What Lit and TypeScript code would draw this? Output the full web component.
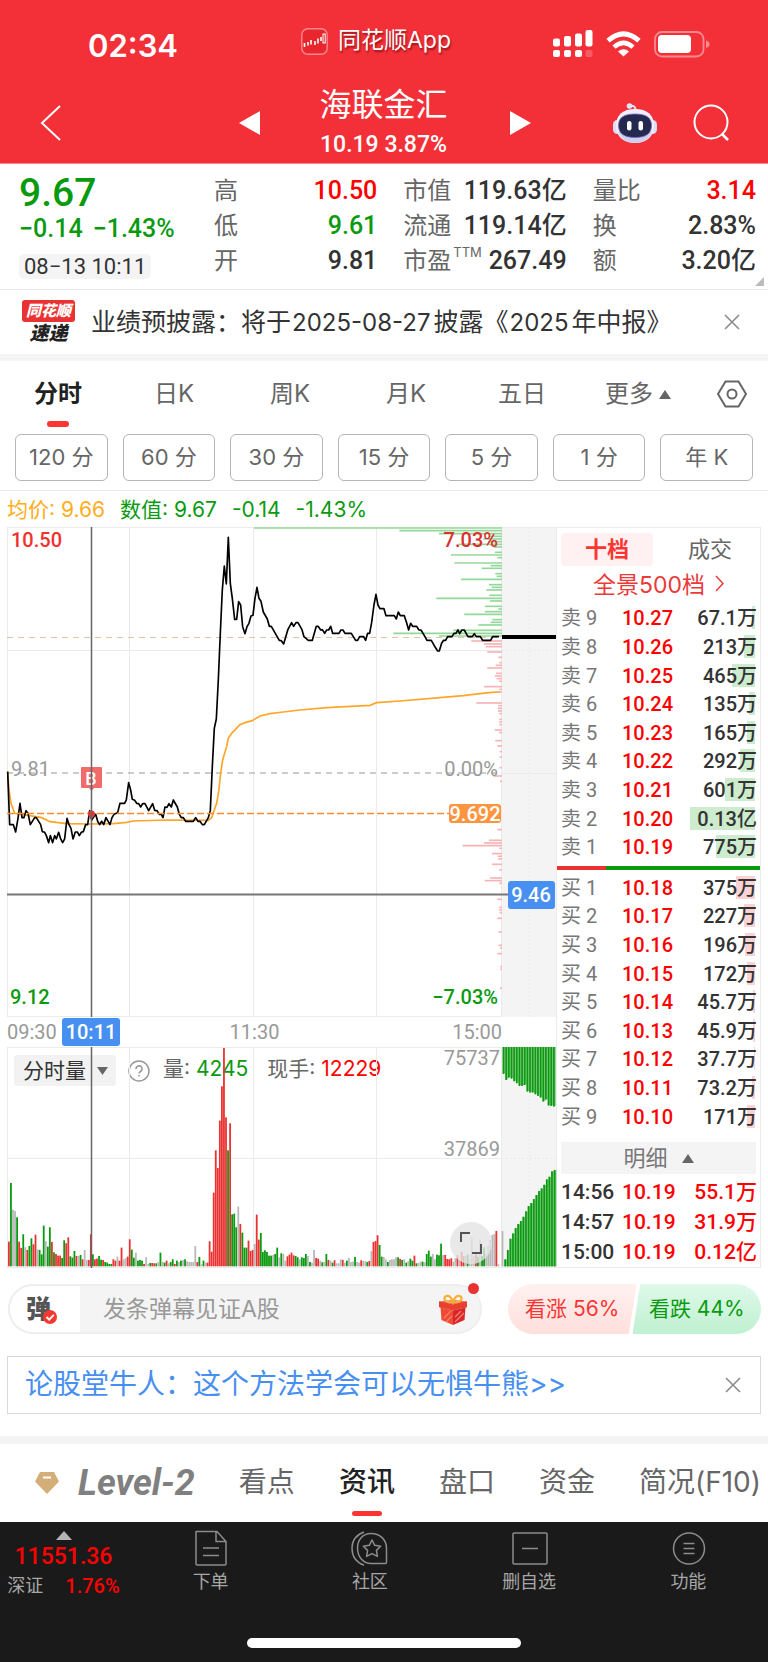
import { LitElement, html, svg, css } from 'lit';
import { customElement } from 'lit/decorators.js';
import { classMap } from 'lit/directives/class-map.js';

const RED = '#ea3232';
const GREEN = '#0a9a0f';
const GREY = '#b9b9b9';

/* Intraday price track, three units per pixel. */
const PRICE =
  '23,755 29,914 40,914 47,936 54,895 60,850 66,893 72,893 78,872 84,880 91,914 104,893 109,893 122,914 127,935 134,937 139,947 146,968 151,947 158,968 164,947 169,957 176,937 182,957 188,968 194,957 201,895 207,914 213,925 219,957 226,936 232,936 238,947 244,937 250,935 257,914 263,914 269,872 275,900 280,893 287,883 293,904 299,914 305,904 311,914 318,893 330,914 336,893 342,883 353,878 360,850 374,850 379,840 386,788 392,810 397,838 404,841 410,850 416,851 422,861 428,851 435,851 446,872 458,851 464,871 471,872 478,883 484,883 489,893 495,861 501,862 507,851 514,861 520,840 532,861 538,883 544,893 550,893 557,904 580,904 587,893 594,904 600,904 607,914 613,914 625,893 631,872 637,740 643,625 649,597 655,480 661,340 667,210 673,138 679,192 685,52 691,190 697,235 704,298 710,298 716,245 722,255 728,320 735,341 741,320 747,310 753,288 759,286 765,235 771,202 777,235 783,244 790,276 802,297 808,319 814,319 826,340 838,361 844,362 851,372 864,328 875,308 881,319 888,308 894,308 906,329 912,350 925,361 937,361 949,319 955,319 962,330 967,329 974,340 980,330 986,330 992,319 998,340 1017,340 1023,330 1029,330 1035,340 1054,340 1067,361 1073,361 1079,350 1091,350 1097,361 1103,340 1109,340 1115,308 1122,255 1128,223 1134,255 1140,266 1152,266 1158,287 1183,287 1189,297 1195,276 1201,287 1213,287 1220,308 1226,330 1232,310 1238,319 1250,319 1257,330 1263,330 1275,350 1281,361 1294,361 1306,382 1313,393 1318,393 1325,370 1331,361 1337,361 1343,350 1356,350 1362,340 1368,340 1374,330 1379,341 1386,330 1393,330 1404,350 1417,350 1423,341 1429,350 1441,350 1448,361 1472,361 1478,350 1497,350';
const AVERAGE =
  '23,755 27,810 33,850 44,880 90,887 125,893 150,905 200,911 270,912 340,911 380,907 400,903 500,900 625,901 635,893 650,850 656,815 662,760 668,720 674,700 680,680 685,655 695,640 720,614 735,608 757,602 780,588 810,581 850,576 900,570 980,563 1110,556 1130,548 1200,543 1320,533 1390,527 1440,521 1475,517 1499,516';

/* Holdings by price: [y, length], same units. */
const CHIPS_UP: [number, number][] = [
  [24, 744], [32, 308], [41, 189], [49, 36], [57, 56], [65, 41], [73, 130], [81, 24], [97, 21], [105, 153], [113, 14],
  [129, 143], [137, 34], [145, 61], [161, 20], [169, 16], [178, 123], [194, 39], [202, 31], [210, 47], [226, 38],
  [235, 197], [243, 36], [259, 51], [267, 11], [275, 51], [283, 113], [299, 29], [307, 34], [315, 71], [331, 146],
  [340, 326], [348, 189],
];
const CHIPS_DOWN: [number, number][] = [
  [363, 92], [372, 54], [380, 49], [396, 44], [412, 11], [428, 8], [436, 19], [444, 44], [460, 18], [468, 21], [476, 16],
  [484, 8], [500, 54], [508, 8], [516, 11], [549, 77], [557, 11], [565, 13], [573, 12], [581, 8], [598, 8], [606, 8],
  [614, 8], [630, 22], [638, 8], [662, 20], [678, 14], [695, 7], [711, 7], [743, 7], [768, 26], [784, 6], [929, 14],
  [961, 39], [969, 54], [977, 118], [985, 8], [1001, 30], [1009, 13], [1017, 11], [1033, 30], [1050, 8], [1074, 36],
  [1082, 52], [1090, 8], [1138, 14], [1162, 8], [1170, 8], [1178, 7], [1195, 14], [1236, 10], [1276, 10], [1284, 5],
  [1301, 14], [1340, 5], [1348, 5], [1405, 6],
];

/* One bar a minute: colour letter and top edge. */
const VOLUME =
  'r1175 g999 a1079 a1083 g1102 r1175 r1194 g1153 a1192 r1200 g1188 g1165 r1183 r1154 a1198 g1200 g1213 g1127 a1173 g1190 g1132 r1176 g1207 r1212 r1217 r1217 g1224 g1171 r1180 r1162 g1219 g1223 g1203 r1218 a1218 g1215 r1228 a1200 a1230 r1230 r1153 g1213 r1228 r1226 g1218 g1229 r1230 g1236 g1238 g1242 g1242 r1228 r1232 a1220 r1232 r1193 a1228 a1225 r1220 r1168 g1199 g1223 a1208 g1232 g1230 g1232 r1242 a1222 a1242 g1239 r1239 r1240 g1240 a1236 g1208 a1236 g1238 r1232 a1240 g1236 g1228 r1242 g1232 a1236 g1232 a1230 g1228 a1234 a1236 a1236 a1236 a1188 r1236 g1221 a1243 g1232 a1238 r1238 r1174 r1205 r1028 r901 r954 r812 r709 r594 r802 g901 r820 g1093 g1091 g1132 a1070 r1122 g1148 g1193 g1193 r1172 r1203 r1200 a1182 r1094 r1169 g1149 g1206 g1201 g1206 g1217 g1217 a1215 g1212 g1193 a1222 g1210 a1212 a1232 r1219 r1214 r1208 r1216 g1218 g1222 a1228 g1222 g1224 g1212 a1218 g1236 a1238 a1200 r1224 r1226 a1232 g1237 a1236 g1212 r1230 a1232 g1238 r1231 a1240 a1240 a1228 r1230 a1238 g1232 a1224 a1236 a1235 g1221 a1236 a1238 r1231 a1233 a1234 g1236 r1233 a1203 r1176 r1173 r1156 g1185 g1220 a1221 a1228 g1236 a1230 a1228 a1228 a1222 g1222 r1227 g1230 a1228 g1238 a1234 g1226 g1232 r1217 g1240 a1239 a1235 g1235 a1237 g1212 g1202 g1220 a1212 a1228 g1214 g1216 g1181 a1215 r1215 r1227 r1228 r1225 a1235 a1225 r1215 a1230 r1206 r1218 a1218 g1214 a1228 a1162 a1218 r1211 g1220 a1168 g1218 g1192 a1212 a1188 a1170 a1155 a1152 r1143 a1243 a1249 a1143'.split(' ');

const ASK_DEPTH = [642, 660, 653, 656, 664, 670, 678, 678, 675, 695, 698, 698, 703, 708, 713, 725, 719, 737, 738, 740];
const BID_DEPTH = [389, 361, 327, 311, 295, 283, 274, 261, 245, 229, 220, 208, 196, 184, 176, 165, 149, 141, 125, 121];

type Level = [string, string, string, number];
const SELL: Level[] = [
  ['卖 9', '10.27', '67.1万', 3], ['卖 8', '10.26', '213万', 11], ['卖 7', '10.25', '465万', 23],
  ['卖 6', '10.24', '135万', 6], ['卖 5', '10.23', '165万', 8], ['卖 4', '10.22', '292万', 15],
  ['卖 3', '10.21', '601万', 30], ['卖 2', '10.20', '0.13亿', 65], ['卖 1', '10.19', '775万', 39],
];
const BUY: Level[] = [
  ['买 1', '10.18', '375万', 19], ['买 2', '10.17', '227万', 11], ['买 3', '10.16', '196万', 10],
  ['买 4', '10.15', '172万', 8], ['买 5', '10.14', '45.7万', 2], ['买 6', '10.13', '45.9万', 2],
  ['买 7', '10.12', '37.7万', 1], ['买 8', '10.11', '73.2万', 3], ['买 9', '10.10', '171万', 8],
];
const TRADES = [['14:56', '10.19', '55.1万'], ['14:57', '10.19', '31.9万'], ['15:00', '10.19', '0.12亿']];

const base = css`
  *, *::before, *::after { box-sizing: border-box; }
  button, input, select {
    font: inherit; color: inherit; background: none; border: 0; padding: 0; margin: 0;
    border-radius: 0; appearance: none; cursor: pointer;
  }
  a { color: inherit; text-decoration: none; }
  svg { display: block; flex: none; }
  table { border-collapse: collapse; }
  th, td { padding: 0; font-weight: inherit; text-align: left; }
  .num { font-family: Roboto, 'Noto Sans CJK SC', sans-serif; font-weight: 500; }
  .up { color: #ff0000; }
  .down { color: #0a9a0f; }
`;

@customElement('stock-chart')
class StockChart extends LitElement {
  static styles = [base, css`
    :host { display: block; min-width: 0; }
    .plot { width: 100%; height: auto; overflow: visible; }
    .plot text { font: 500 20px Roboto, sans-serif; }
    .axis {
      position: relative; display: flex; justify-content: space-between; align-items: center;
      height: 30px; padding-right: 54px; color: #999; font: 400 20px Roboto, sans-serif;
    }
    .cursor {
      position: absolute; left: 55px; top: 1px; width: 58px; height: 28px; line-height: 28px; text-align: center;
      background: #478ff0; color: #fff; border-radius: 3px; font-weight: 500;
    }
    .volume { position: relative; }
    .volume .plot { position: relative; pointer-events: none; }
    .tools {
      position: absolute; left: 7px; top: 8px; display: flex; align-items: center; height: 31px;
      font: 400 21px/27px Inter, 'Noto Sans CJK SC', sans-serif; color: #666;
    }
    .picker { position: relative; display: flex; align-items: center; }
    .picker select {
      width: 102px; height: 31px; padding-left: 9px; background: #f2f2f2; border-radius: 3px; color: #333;
      font-size: 21px; line-height: 31px;
    }
    .caret { position: absolute; right: 8px; }
    .help { display: flex; margin: 0 13px 0 12px; }
    .figure { margin-right: 19px; padding-bottom: 4px; white-space: nowrap; }
    .figure b { font-weight: 400; }
    .expand {
      position: absolute; right: 64px; bottom: 4px; width: 42px; height: 42px; border-radius: 50%;
      background: rgba(228, 228, 228, .8); display: grid; place-items: center;
    }
  `];

  private price() {
    return html`<svg class="plot" viewBox="0 0 549 490" role="img" aria-label="分时走势">
      <rect x="495" y="0" width="54" height="490" fill="#f4f4f4" />
      <g stroke="#ebebeb" fill="none">
        <path d="M0 .5H549M.5 0V490M0 489.5H495M122.5 0V490M246.500 0V490M369.500 0V490M494.500 0V490M0 123.500H494M495 246.500H549" />
        <path d="M495 123.500H549M522.500 0V490" stroke-dasharray="2 2" />
      </g>
      <path d="M0 110.500H494" stroke="#e2c4a2" stroke-dasharray="6 5" />
      <path d="M0 246H494" stroke="#999" stroke-dasharray="6 5" />
      <text x="4" y="249" fill="#999" style="font-weight:400">9.81</text>
      <g transform="translate(-7 -7) scale(.3333)">
        <g stroke="#94d79a" stroke-width="5">
          ${CHIPS_UP.map(([y, w]) => svg`<path d=${`M${1506 - w} ${y}H1506`} />`)}
        </g>
        <g stroke="#f7b3b5" stroke-width="5">
          ${CHIPS_DOWN.map(([y, w]) => svg`<path d=${`M${1506 - w} ${y}H1506`} />`)}
        </g>
        <polyline points=${AVERAGE} fill="none" stroke="#ffa528" stroke-width="5" />
        <polyline points=${PRICE} fill="none" stroke="#000" stroke-width="5" stroke-linejoin="round" />
      </g>
      <path d="M495 110H549" stroke="#000" stroke-width="4" />
      <path d="M0 286.500H442" stroke="#f98a30" stroke-width="1.500" stroke-dasharray="7 3" />
      <rect x="442" y="277" width="52" height="19" rx="3" fill="#fd9540" />
      <text x="468" y="294" fill="#fff" text-anchor="middle">9.692</text>
      <text x="4" y="20" fill="#f23030">10.50</text>
      <text x="491" y="20" fill="#dd3030" text-anchor="end">7.03%</text>
      <text x="491" y="249" fill="#999" text-anchor="end" style="font-weight:400">0.00%</text>
      <text x="3" y="477" fill=${GREEN}>9.12</text>
      <text x="491" y="477" fill=${GREEN} text-anchor="end">−7.03%</text>
      <path d="M0 367.500H501" stroke="#777" stroke-width="2" />
      <path d="M84.500 262V286" stroke="#ea3232" stroke-dasharray="2 2" />
      <circle cx="84.500" cy="287" r="3.500" fill="#ea3232" />
      <path d="M75 240h19a1 1 0 0 1 1 1v19a1 1 0 0 1-1 1h-7l-2.500 3-2.500-3h-7a1 1 0 0 1-1-1v-19a1 1 0 0 1 1-1z" fill="#f26b6b" />
      <text x="84" y="258" fill="#fff" text-anchor="middle" style="font-size:18px">B</text>
      <path d="M84.500 0V490" stroke="#666" stroke-width="1.500" />
      <rect x="501" y="354" width="47" height="28" rx="3" fill="#478ff0" />
      <text x="524" y="375" fill="#fff" text-anchor="middle">9.46</text>
    </svg>`;
  }

  private volume() {
    const fill: Record<string, string> = { r: RED, g: GREEN, a: GREY };
    return html`<svg class="plot" viewBox="0 0 549 221" role="img" aria-label="成交量">
      <rect x="495" y="0" width="54" height="220" fill="#f4f4f4" />
      <g stroke="#ebebeb" fill="none">
        <path d="M0 .5H549M.5 0V221M122.500 0V221M246.500 0V221M369.500 0V221M494.500 0V221M0 111.500H494M0 220.500H549" />
        <path d="M495 111.500H549M522.500 0V220" stroke-dasharray="2 2" />
      </g>
      <g transform="translate(-7 -197) scale(.3333)">
        ${VOLUME.map((v, i) => svg`<rect x=${24 + 6.145 * i} y=${+v.slice(1)} width="5.400" height=${1249 - +v.slice(1)} fill=${fill[v[0]]} />`)}
      </g>
      <g transform="translate(495 0) scale(.3333)">
        ${ASK_DEPTH.map((b, i) => svg`<rect x=${2 + 7.950 * i} y="0" width="8" height=${b - 563} fill="#7cc67e" /><rect x=${2 + 7.950 * i} y="0" width="5" height=${b - 561} fill=${GREEN} />`)}
        ${BID_DEPTH.map((t, i) => svg`<rect x=${7 + 7.800 * i} y=${t + 249} width="8" height=${409 - t} fill="#7cc67e" /><rect x=${7 + 7.800 * i} y=${t + 248} width="5" height=${410 - t} fill=${GREEN} />`)}
      </g>
      <text x="493" y="18" fill="#999" text-anchor="end" style="font-weight:400">75737</text>
      <text x="493" y="109" fill="#999" text-anchor="end" style="font-weight:400">37869</text>
      <path d="M84.500 0V221" stroke="#666" stroke-width="1.500" />
    </svg>`;
  }

  render() {
    return html`
      ${this.price()}
      <div class="axis"><span>09:30</span><span>11:30</span><span>15:00</span><span class="cursor">10:11</span></div>
      <div class="volume">
        <div class="tools">
          <span class="picker">
            <select aria-label="副图指标"><option>分时量</option></select>
            <svg class="caret" width="11" height="8" viewBox="0 0 11 8"><path d="M0 0h11L5.500 8z" fill="#666" /></svg>
          </span>
          <button class="help" aria-label="指标说明">
            <svg width="22" height="22" viewBox="0 0 22 22" fill="none" stroke="#999" stroke-width="1.500">
              <circle cx="11" cy="11" r="10" />
              <path d="M8 9a3 3 0 1 1 4.500 2.500q-1.500.9-1.500 2.100M11 15v1.600" />
            </svg>
          </button>
          <span class="figure">量: <b class="down">4245</b></span>
          <span class="figure">现手: <b class="up">12229</b></span>
        </div>
        ${this.volume()}
        <button class="expand" aria-label="全屏">
          <svg width="22" height="22" viewBox="0 0 22 22" fill="none" stroke="#555" stroke-width="2"><path d="M1 10V1h9M21 12v9h-9" /></svg>
        </button>
      </div>`;
  }
}

@customElement('order-book')
class OrderBook extends LitElement {
  static styles = [base, css`
    :host {
      display: flex; flex-direction: column; border: 1px solid #ebebeb;
      font-family: Roboto, 'Noto Sans CJK SC', sans-serif; color: #333;
    }
    .tabs { display: flex; justify-content: space-between; margin: 5px 4px 0; }
    .tab { width: 92px; height: 33px; padding-bottom: 4px; font: 400 22px/29px 'Noto Sans CJK SC', sans-serif; color: #666; }
    .tab.on { background: #fff1f1; color: #fb3632; font-weight: 700; border-radius: 4px; }
    .more {
      display: flex; justify-content: center; align-items: center; gap: 10px; height: 38px; padding-bottom: 4px;
      font: 400 23px Inter, 'Noto Sans CJK SC', sans-serif; color: #ea3a3a;
    }
    table { flex: 1; display: flex; }
    tbody { flex: 1; display: flex; flex-direction: column; }
    tr { flex: 1; display: grid; grid-template-columns: 61px 1fr auto; align-items: center; padding: 0 3px 0 4px; font-size: 20px; line-height: 28px; }
    th { font-weight: 400; color: #777; white-space: nowrap; }
    td { font-weight: 500; }
    .qty { position: relative; text-align: right; }
    .depth { position: absolute; right: 2px; top: 2px; height: 23px; background: #cdebcd; }
    .buy .depth { background: #fcd3d4; }
    .qty span { position: relative; }
    .ratio { display: flex; height: 4px; margin: 4px 0; background: #0a9a0f; }
    .ratio i { width: 24%; background: #ea3232; }
    .detail {
      display: flex; justify-content: center; align-items: center; gap: 14px; height: 32px; margin: 11px 4px 3px;
      background: #f4f4f4; color: #777; font: 400 22px/28px 'Noto Sans CJK SC', sans-serif;
    }
    .detail span { padding-bottom: 4px; }
    .trades { flex: none; }
    .trades tr { font-size: 21px; line-height: 30px; }
    .trades th { color: #333; font-weight: 500; }
  `];

  private levels(rows: Level[], side: string) {
    return html`<table class=${side} aria-label=${side === 'buy' ? '买盘' : '卖盘'}><tbody>
      ${rows.map(([name, price, qty, depth]) => html`<tr>
        <th scope="row">${name}</th><td class="up">${price}</td>
        <td class="qty"><i class="depth" style=${`width:${depth}px`}></i><span>${qty}</span></td>
      </tr>`)}
    </tbody></table>`;
  }

  render() {
    return html`
      <div class="tabs"><button class="tab on">十档</button><button class="tab">成交</button></div>
      <a class="more" href="#depth">全景500档
        <svg width="9" height="17" viewBox="0 0 9 17" fill="none" stroke="#ea3a3a" stroke-width="1.500"><path d="M1 1l7 7.500L1 16" /></svg>
      </a>
      ${this.levels(SELL, 'sell')}
      <div class="ratio"><i></i></div>
      ${this.levels(BUY, 'buy')}
      <button class="detail"><span>明细</span><svg width="12" height="9" viewBox="0 0 12 9"><path d="M0 9L6 0l6 9z" fill="#666" /></svg></button>
      <table class="trades" aria-label="成交明细"><tbody>
        ${TRADES.map(([t, p, q]) => html`<tr><th scope="row">${t}</th><td class="up">${p}</td><td class="up">${q}</td></tr>`)}
      </tbody></table>`;
  }
}

@customElement('app-root')
class AppRoot extends LitElement {
  static styles = [base, css`
    :host { display: block; background: #fff; color: #333; font-family: Inter, 'Noto Sans CJK SC', sans-serif; line-height: 1.2; }
    header { background: #f33038; color: #fff; border-bottom: 1px solid #f7898d; }
    .status { display: grid; grid-template-columns: 1fr auto 1fr; align-items: center; height: 82px; padding: 6px 58px 0; }
    .clock { font-size: 31px; font-weight: 600; padding: 4px 0 0 30px; }
    .brand { display: flex; align-items: center; gap: 10px; font-size: 23px; text-shadow: 1px 2px 2px rgba(90, 0, 0, .6); margin: 0 16px 6px 0; }
    .signals { display: flex; justify-content: flex-end; align-items: center; gap: 13px; }
    .nav { display: grid; grid-template-columns: 1fr auto 1fr; align-items: center; height: 81px; padding: 0 38px 0 40px; }
    .nav button { display: flex; }
    .stock { display: flex; align-items: center; }
    .name { width: 250px; padding-right: 3px; text-align: center; }
    h1 { margin: 0; font-size: 32px; line-height: 44px; font-weight: 400; }
    .name p { margin: 0; font-size: 23px; line-height: 36px; }
    .acts { display: flex; justify-content: flex-end; align-items: center; gap: 36px; }

    .quote {
      position: relative; display: grid; grid-template-columns: 169px 1fr 1fr 1fr; column-gap: 26px;
      padding: 9px 12px 8px 19px; height: 126px; border-bottom: 1px solid #e9e9e9;
    }
    .last { display: flex; flex-direction: column; align-items: flex-start; }
    .last .big { font-size: 39px; line-height: 41px; }
    .last .chg { display: flex; gap: 10px; font-size: 25px; line-height: 30px; white-space: nowrap; }
    .stamp { margin-top: 10px; padding: 0 5px; font-size: 22px; line-height: 25px; font-weight: 400; background: #f4f4f4; border-radius: 5px; color: #333; }
    dl { margin: 0; }
    dl div { display: flex; justify-content: space-between; height: 35px; line-height: 35px; font-size: 24px; white-space: nowrap; }
    dt { color: #666; }
    dt sup { position: relative; top: -12px; margin-left: 2px; font-size: 13px; line-height: 1px; vertical-align: baseline; }
    dd { margin: 0; font-size: 25px; }
    .corner { position: absolute; right: 4px; bottom: 3px; }

    .notice { display: flex; align-items: center; height: 64px; padding: 0 28px 0 22px; }
    .tag { width: 53px; margin-right: 16px; text-align: center; font-style: italic; font-weight: 900; }
    .tag b { display: block; margin-bottom: 2px; background: #ea3232; color: #fff; border-radius: 3px; font-size: 15px; line-height: 22px; }
    .tag span { display: block; color: #222; font-size: 19px; line-height: 20px; }
    .notice p { flex: 1; margin: 0; font-size: 25px; white-space: nowrap; }
    .notice p i { font-style: normal; font-size: 24px; padding: 0 3px 0 1px; }
    .band { height: 7px; background: #f4f4f4; }
    .band.tall { height: 8px; }

    .periods { display: flex; height: 73px; padding-right: 21px; }
    .period { flex: 1; height: 66px; font-size: 24px; color: #666; position: relative; }
    .period.on { color: #222; font-weight: 700; }
    .period.on::after, .section.on::after {
      content: ''; position: absolute; left: 50%; bottom: 0; width: 22px; margin-left: -11px; height: 6px; border-radius: 3px; background: #fb3632;
    }
    .period svg { display: inline; margin-left: 6px; vertical-align: 3px; }
    .gear { width: 51px; height: 66px; display: flex; align-items: center; justify-content: flex-end; }
    .spans { display: flex; gap: 15px; padding: 0 15px 9px; border-bottom: 1px solid #e9e9e9; }
    .spans button { flex: 1; height: 47px; border: 1px solid #b5b5b5; border-radius: 6px; font-size: 22px; color: #666; white-space: nowrap; }
    .legend { display: flex; gap: 15px; padding: 0 7px; height: 36px; line-height: 38px; font-size: 21px; }
    .legend .avg { color: #ffae1a; }
    .main { display: grid; grid-template-columns: minmax(0, 1fr) 205px; margin: 0 7px; }

    .social { display: flex; gap: 26px; padding: 16px 7px 0 8px; }
    .danmu { position: relative; flex: 1; min-width: 0; display: flex; align-items: center; height: 50px; border: 2px solid #eee; border-radius: 25px; background: #f4f4f4; padding-right: 12px; }
    .toggle { position: relative; flex: none; width: 70px; height: 46px; border-radius: 23px 0 0 23px; background: #fff; font-size: 25px; font-weight: 900; color: #555; text-align: left; padding-left: 16px; }
    .toggle svg { position: absolute; left: 33px; top: 24px; }
    .danmu input { flex: 1; min-width: 0; height: 46px; padding-left: 23px; font-size: 23px; cursor: text; }
    .danmu input::placeholder { color: #999; opacity: 1; }
    .dot { position: absolute; right: 1px; top: -3px; width: 11px; height: 11px; border-radius: 50%; background: #ea3232; }
    .votes { display: flex; flex: none; width: 253px; }
    .votes button { flex: 1; height: 50px; font-size: 21px; white-space: nowrap; }
    .bull { margin-right: -4px; color: #fb3632; background: linear-gradient(#fff1f0, #ffdfdc); border-radius: 25px 0 0 25px; clip-path: polygon(0 0, 100% 0, 94% 100%, 0 100%); }
    .bear { color: #0a9a0f; background: linear-gradient(#dff9ea, #bff0d1); border-radius: 0 25px 25px 0; clip-path: polygon(6% 0, 100% 0, 100% 100%, 0 100%); }

    .promo { display: flex; align-items: center; height: 58px; margin: 22px 7px; padding: 0 19px 0 17px; border: 1px solid #d9d9d9; }
    .promo a { flex: 1; font-size: 28px; color: #478ff0; white-space: nowrap; }
    .close { display: flex; }

    .sections { display: flex; justify-content: space-between; align-items: center; height: 78px; padding: 0 7px 0 34px; }
    .section { position: relative; height: 78px; font-size: 28px; color: #666; white-space: nowrap; display: flex; align-items: center; }
    .section.on { color: #222; font-weight: 500; }
    .section.on::after { width: 30px; margin-left: -15px; bottom: 6px; height: 5px; }
    .level { gap: 18px; color: #808080; font: italic 700 36px Roboto, sans-serif; }

    footer { background: #1a1a1a; color: #a6a6a6; height: 141px; display: flex; flex-direction: column; justify-content: space-between; align-items: center; padding-bottom: 15px; }
    .dock { display: grid; grid-template-columns: 131px repeat(4, 1fr); width: 100%; }
    .index { display: flex; flex-direction: column; align-items: center; padding: 9px 4px 0 0; }
    .index strong { font-size: 23px; line-height: 30px; margin-top: 2px; font-weight: 500; }
    .index span { display: flex; align-items: center; gap: 22px; font-size: 18px; line-height: 28px; }
    .index .market { color: #a6a6a6; font-weight: 400; }
    .index em { font-style: normal; font-size: 20px; }
    .item { display: flex; flex-direction: column; align-items: center; padding-top: 8px; font-size: 18px; line-height: 22px; }
    .item svg { margin-bottom: 4px; }
    .home { width: 274px; height: 10px; border-radius: 5px; background: #fff; }
  `];

  private cross() {
    return html`<svg width="16" height="16" viewBox="0 0 16 16" stroke="#8c8c8c" stroke-width="1.600"><path d="M1 1l14 14M15 1L1 15" /></svg>`;
  }

  private header() {
    return html`<header>
      <div class="status">
        <span class="clock">02:34</span>
        <span class="brand">
          <svg width="27" height="27" viewBox="0 0 27 27">
            <rect x=".8" y=".8" width="25.400" height="25.400" rx="6" fill="#e8262d" stroke="#f58a8e" stroke-width="1.400" />
            <path d="M3.500 15v4M7 14v3.500M10 12v4.500M14 13v4M17 10.500v5M20 9v4" stroke="#fff" stroke-width="1.600" />
            <rect x="22" y="6" width="2.200" height="9" fill="none" stroke="#fff" />
          </svg>
          同花顺App
        </span>
        <span class="signals">
          <svg width="40" height="28" viewBox="0 0 40 28" fill="#fff">
            <rect x="0" y="8.500" width="7" height="8" rx="2" /><rect x="11" y="6" width="7" height="10.500" rx="2" />
            <rect x="22" y="3.500" width="7" height="13" rx="2" /><rect x="32.500" y="0" width="7" height="16.500" rx="2" />
            <rect x="0" y="20" width="7" height="7" rx="2" /><rect x="11" y="20" width="7" height="7" rx="2" />
            <rect x="22" y="20" width="7" height="7" rx="2" /><rect x="32.500" y="20" width="7" height="7" rx="2" opacity=".22" />
          </svg>
          <svg width="35" height="26" viewBox="0 0 35 26" fill="none" stroke="#fff" stroke-width="5">
            <path d="M2 9.600Q17.500-4 33 9.600" /><path d="M8 16.200Q17.500 7.500 27 16.200" stroke-width="4.500" />
            <path d="M12 20.500q5.500-4.500 11 0l-5.500 5z" fill="#fff" stroke="none" />
          </svg>
          <svg width="56" height="27" viewBox="0 0 56 27">
            <rect x="1" y="1" width="48.500" height="24.500" rx="7" fill="none" stroke="#f98b90" stroke-width="1.800" />
            <rect x="4" y="4" width="33" height="18" rx="4" fill="#fff" />
            <path d="M52 9.500q3.500 1.300 3.500 3.800t-3.500 3.800z" fill="#f98b90" />
          </svg>
        </span>
      </div>
      <div class="nav">
        <button aria-label="返回"><svg width="22" height="36" viewBox="0 0 22 36" fill="none" stroke="#fff" stroke-width="2"><path d="M20 1L2 18l18 17" /></svg></button>
        <div class="stock">
          <button aria-label="上一只"><svg width="21" height="24" viewBox="0 0 21 24"><path d="M21 0v24L0 12z" fill="#fff" /></svg></button>
          <div class="name"><h1>海联金汇</h1><p class="num">10.19 3.87%</p></div>
          <button aria-label="下一只"><svg width="21" height="24" viewBox="0 0 21 24"><path d="M0 0v24l21-12z" fill="#fff" /></svg></button>
        </div>
        <div class="acts">
          <button aria-label="智能助手">
            <svg width="44" height="42" viewBox="0 0 44 42">
              <path d="M17 4q6-1 5.500 5" fill="none" stroke="#dfe3f6" stroke-width="2" /><circle cx="16.500" cy="4" r="2.800" fill="#dfe3f6" />
              <rect x="0" y="18" width="9" height="14" rx="4.500" fill="#dcdff7" /><rect x="35" y="18" width="9" height="14" rx="4.500" fill="#dcdff7" />
              <path d="M22 7c12 0 19 6 19 16.500S34 41 22 41 3 34 3 23.500 10 7 22 7z" fill="#eff0fb" />
              <path d="M5 30c3 7 9 11 17 11s14-4 17-11z" fill="#cdd1ef" />
              <path d="M22 12c11 0 16.500 3.500 16.500 11.500S33 35.500 22 35.500 5.500 31.500 5.500 23.500 11 12 22 12z" fill="#232a4e" stroke="#7a62c8" stroke-width=".8" />
              <rect x="14" y="19" width="4.500" height="9.500" rx="2.200" fill="#fff" /><rect x="25.500" y="19" width="4.500" height="9.500" rx="2.200" fill="#fff" />
            </svg>
          </button>
          <button aria-label="搜索"><svg width="37" height="37" viewBox="0 0 37 37" fill="none" stroke="#fff" stroke-width="2"><circle cx="18" cy="18" r="16.500" /><path d="M29 30l6 6" stroke-width="2.600" /></svg></button>
        </div>
      </div>
    </header>`;
  }

  private quote() {
    const row = (k: unknown, v: string, c = '') => html`<div><dt>${k}</dt><dd class="num ${c}">${v}</dd></div>`;
    return html`<section class="quote" aria-label="行情">
      <div class="last num down">
        <span class="big">9.67</span>
        <span class="chg"><span>−0.14</span><span>−1.43%</span></span>
        <time class="stamp">08−13 10:11</time>
      </div>
      <dl>${row('高', '10.50', 'up')}${row('低', '9.61', 'down')}${row('开', '9.81')}</dl>
      <dl>${row('市值', '119.63亿')}${row('流通', '119.14亿')}${row(html`市盈<sup>TTM</sup>`, '267.49')}</dl>
      <dl>${row('量比', '3.14', 'up')}${row('换', '2.83%')}${row('额', '3.20亿')}</dl>
      <svg class="corner" width="9" height="9" viewBox="0 0 9 9"><path d="M9 0v9H0z" fill="#bbb" /></svg>
    </section>`;
  }

  private dock() {
    const items: [string, unknown][] = [
      ['下单', svg`<path d="M3 1h21l9 10v22.500a1 1 0 0 1-1 1H4a1 1 0 0 1-1-1zM23 1v10h10M10 17.500h16M10 25h16" />`],
      ['社区', svg`<path d="M12 1.500C4 4.500 0 10 0 17.800s4 14 12 17M19 3C10.500 3 5.500 9.500 5.500 17.800S11 33 19 33h14.500a1 1 0 0 0 1-1V17.800C34.500 9 28 3 19 3z" /><path d="M20 9.500l2.700 5.300 6 .9-4.300 4.200 1 6-5.400-2.800-5.400 2.800 1-6-4.300-4.200 6-.9z" />`],
      ['删自选', svg`<rect x="1" y="2.500" width="34" height="31" rx="1" /><path d="M10 18h16" />`],
      ['功能', svg`<circle cx="18" cy="18" r="15.500" /><path d="M12.500 13h11M12.500 18h11M12.500 23h11" />`],
    ];
    return html`<footer>
      <nav class="dock" aria-label="底部导航">
        <a class="index up num" href="#index">
          <svg width="16" height="9" viewBox="0 0 16 9"><path d="M8 0l8 9H0z" fill="#b5b5b5" /></svg>
          <strong class="num">11551.36</strong>
          <span><span class="market">深证</span><em>1.76%</em></span>
        </a>
        ${items.map(([label, icon]) => html`<a class="item" href="#dock">
          <svg width="37" height="37" viewBox="-1 0 37 36" fill="none" stroke="#8c8c8c" stroke-width="1.500" stroke-linejoin="round">${icon}</svg>${label}
        </a>`)}
      </nav>
      <div class="home"></div>
    </footer>`;
  }

  render() {
    const periods = ['分时', '日K', '周K', '月K', '五日', '更多'];
    const sections = ['看点', '资讯', '盘口', '资金', '简况(F10)'];
    return html`
      ${this.header()}
      ${this.quote()}
      <div class="notice">
        <span class="tag"><b>同花顺</b><span>速递</span></span>
        <p>业绩预披露：将于<i>2025-08-27</i>披露《<i>2025</i>年中报》</p>
        <button class="close" aria-label="关闭公告">${this.cross()}</button>
      </div>
      <div class="band"></div>
      <nav class="periods" aria-label="周期">
        ${periods.map((p, i) => html`<button class=${classMap({ period: true, on: i === 0 })}>${p}${
          i === 5 ? html`<svg width="12" height="9" viewBox="0 0 12 9"><path d="M6 0l6 9H0z" fill="#666" /></svg>` : ''}</button>`)}
        <button class="gear" aria-label="设置"><svg width="30" height="28" viewBox="0 0 30 28" fill="none" stroke="#666" stroke-width="2"><path d="M8.500 1.500h13L29 14l-7.500 12.500h-13L1 14z" /><circle cx="15" cy="14" r="4.500" /></svg></button>
      </nav>
      <div class="spans">${['120 分', '60 分', '30 分', '15 分', '5 分', '1 分', '年 K'].map((s) => html`<button>${s}</button>`)}</div>
      <div class="legend"><span class="avg">均价: 9.66</span><span class="down">数值: 9.67</span><span class="down">-0.14</span><span class="down">-1.43%</span></div>
      <div class="main"><stock-chart></stock-chart><order-book></order-book></div>
      <div class="social">
        <div class="danmu">
          <button class="toggle" aria-label="弹幕开关">弹<svg width="14" height="14" viewBox="0 0 14 14"><circle cx="7" cy="7" r="7" fill="#f5392f" /><path d="M3.500 7l2.700 2.700 4.600-4.900" fill="none" stroke="#fff" stroke-width="1.800" /></svg></button>
          <input type="text" aria-label="弹幕" placeholder="发条弹幕见证A股" />
          <svg width="30" height="31" viewBox="0 0 30 31">
            <path d="M1 7.500L15 6l14 1.500-.5 6L15 16 1.500 13.500z" fill="#f5654a" /><path d="M1 7.500L15 10l14-2.500V13l-14 3.500L1 13z" fill="#e8402f" />
            <path d="M2.500 13.500L15 16.500V31L3.500 26z" fill="#ef4a35" /><path d="M27.500 13.500L15 16.500V31l11.500-5z" fill="#d7262c" />
            <path d="M6 24l7-7M8 28l6-6M17 28l9-9M17 23l6-6" stroke="#f98264" stroke-width="1.200" />
            <path d="M15 8C10 9 6 7 6.500 4s6-4 8.500 4c2.500-8 8-7 8.500-4S20 9 15 8z" fill="none" stroke="#f6b03c" stroke-width="2.200" />
          </svg>
          <i class="dot"></i>
        </div>
        <div class="votes"><button class="bull">看涨 56%</button><button class="bear">看跌 44%</button></div>
      </div>
      <div class="promo">
        <a href="#promo">论股堂牛人：这个方法学会可以无惧牛熊&gt;&gt;</a>
        <button class="close" aria-label="关闭推广">${this.cross()}</button>
      </div>
      <div class="band tall"></div>
      <nav class="sections" aria-label="栏目">
        <a class="section level" href="#level2">
          <svg width="26" height="24" viewBox="0 0 26 24"><path d="M6 1h14l5 9.500L13 23 1 10.500z" fill="#d3ae78" /><path d="M9 6.500h8" stroke="#fff" stroke-width="2" /></svg>Level-2
        </a>
        ${sections.map((s, i) => html`<a class=${classMap({ section: true, on: i === 1 })} href="#section">${s}</a>`)}
      </nav>
      ${this.dock()}`;
  }
}
